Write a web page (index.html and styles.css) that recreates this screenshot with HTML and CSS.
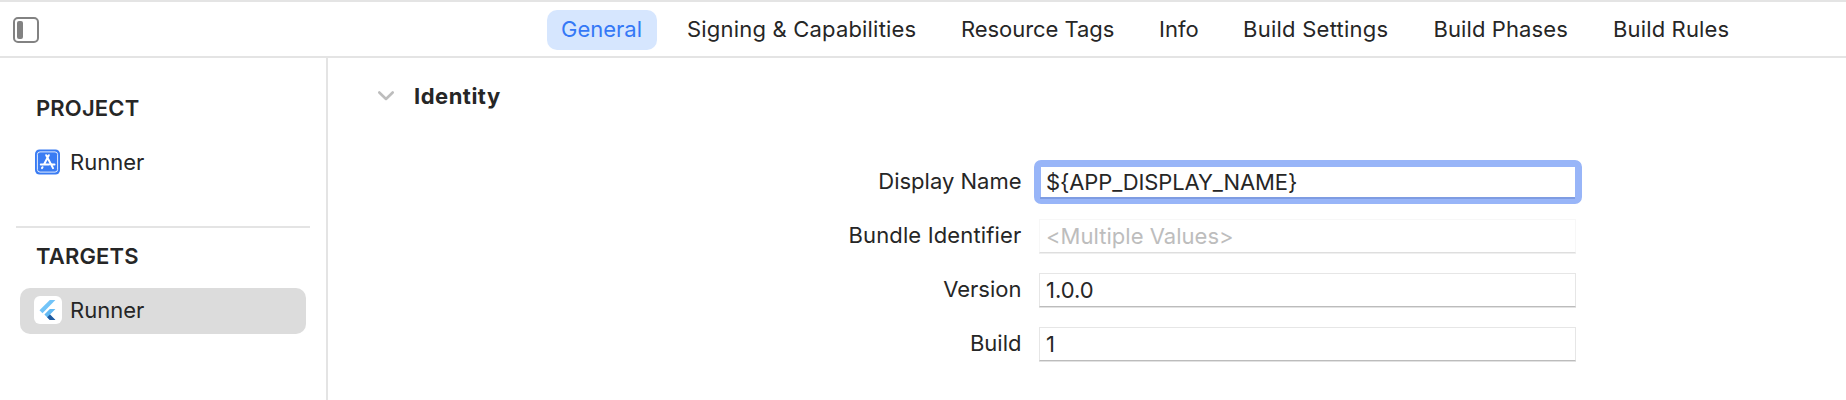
FILE: index.html
```html
<!DOCTYPE html>
<html lang="en">
<head>
<meta charset="utf-8">
<title>Runner</title>
<link rel="stylesheet" href="styles.css">
</head>
<body>
<header class="toolbar">
  <svg class="panel-icon" width="26" height="26" viewBox="0 0 26 26"><rect x="1" y="1" width="24" height="24" rx="4" fill="none" stroke="#828282" stroke-width="2"/><rect x="4" y="4" width="6" height="18" rx="2" fill="#828282"/></svg>
  <nav class="tabs">
    <span class="tab general">General</span>
    <span class="tab signing">Signing &amp; Capabilities</span>
    <span class="tab resource">Resource Tags</span>
    <span class="tab info">Info</span>
    <span class="tab settings">Build Settings</span>
    <span class="tab phases">Build Phases</span>
    <span class="tab rules">Build Rules</span>
  </nav>
</header>
<div class="body">
  <aside class="sidebar">
    <h2 class="heading">PROJECT</h2>
    <div class="item">
      <svg class="item-icon" width="28" height="28" viewBox="0 0 28 28"><rect x="1" y="1.500" width="25" height="25" rx="4.500" fill="#3a7cf3"/><rect x="3.400" y="3.900" width="20.200" height="20.200" rx="2.600" fill="none" stroke="#fff" stroke-opacity=".85" stroke-width="1"/><g stroke="#fff" stroke-width="2" stroke-linecap="round"><path d="M14.800 7.200 10 16.500M8.500 19.200l-.5.9M12.200 7.200l6.800 12.900M6.800 16.600h8.200M17.800 16.600h2.700"/></g></svg>
      <span class="item-name">Runner</span>
    </div>
    <hr class="divider">
    <h2 class="heading">TARGETS</h2>
    <div class="item selected">
      <svg class="item-icon" width="28" height="28" viewBox="0 0 28 28"><rect width="28" height="28" rx="6" fill="#fff"/><path d="M15.800 4H21.400L8.500 17.200 5.500 14.200z" fill="#72c4f8"/><path d="M15.800 13.100H21.400L16 18.600 21.400 24H15.800L10.400 18.600z" fill="#63baf3"/><path d="M13.100 21.300 16 18.600 21.400 24H15.800z" fill="#205a9f"/></svg>
      <span class="item-name">Runner</span>
    </div>
  </aside>
  <main class="content">
    <div class="section">
      <svg class="chevron" width="18" height="12" viewBox="0 0 18 12"><path d="M2.300 2.500 9 9l6.700-6.500" fill="none" stroke="#bdbdbd" stroke-width="2.600" stroke-linecap="round" stroke-linejoin="round"/></svg>
      <h1 class="title">Identity</h1>
    </div>
    <div class="form">
      <div class="row"><label class="label">Display Name</label><div class="field focused"><span class="macro">${APP_DISPLAY_NAME}</span></div></div>
      <div class="row"><label class="label bundle">Bundle Identifier</label><div class="field muted"><span class="multiple">&lt;Multiple Values&gt;</span></div></div>
      <div class="row"><label class="label">Version</label><div class="field"><span>1.0.0</span></div></div>
      <div class="row"><label class="label">Build</label><div class="field"><span>1</span></div></div>
    </div>
  </main>
</div>
</body>
</html>
```
FILE: styles.css
```css
* { box-sizing: border-box; }
body {
  margin: 0;
  height: 400px;
  overflow: hidden;
  display: flex;
  flex-direction: column;
  background: #fff;
  color: #262626;
  font: 22px/30px Inter, "Liberation Sans", sans-serif;
  white-space: nowrap;
}
.toolbar {
  height: 58px;
  flex: none;
  display: flex;
  align-items: flex-start;
  border-top: 2px solid #e4e4e4;
  border-bottom: 2px solid #e4e4e4;
  padding-left: 13px;
}
.panel-icon { margin-top: 15px; flex: none; }
.tabs { display: flex; gap: 16px; margin: 8px 0 0 508px; }
.tab { height: 40px; padding: 4px 0 0 14px; border-radius: 10px; }
.general { width: 110px; background: #d6e6fe; color: #3478f6; }
.signing { width: 258px; letter-spacing: 0.19px; }
.resource { width: 182px; letter-spacing: -0.05px; }
.info { width: 68px; }
.settings { width: 174.500px; letter-spacing: 0.25px; }
.phases { width: 163.500px; letter-spacing: 0.1px; }
.rules { width: 146px; letter-spacing: 0.15px; }
.body { flex: 1; display: flex; }
.sidebar { width: 328px; flex: none; border-right: 2px solid #e4e4e4; padding-top: 35px; }
.heading { margin: 0 0 0 36px; font-size: 22px; font-weight: 600; line-height: 30px; letter-spacing: 0.15px; }
.item { display: flex; align-items: center; height: 46px; margin: 17px 20px 0; padding-left: 14px; border-radius: 10px; gap: 8px; }
.item-icon { flex: none; margin-top: -2px; }
.item-name { padding-bottom: 2px; }
.divider { height: 2px; margin: 40px 16px 13px; border: 0; background: #e4e4e4; }
.selected { background: #dcdcdc; }
.content { flex: 1; padding: 23px 0 0 49px; }
.section { display: flex; align-items: center; height: 30px; }
.chevron { margin-right: 19px; }
.title { margin: 0; font-size: 22px; font-weight: 700; line-height: 30px; letter-spacing: 0.5px; }
.form { display: grid; gap: 20px; margin-top: 54px; }
.row { display: flex; height: 34px; }
.label { width: 644.500px; text-align: right; margin-right: 17.500px; padding-top: 1px; }
.bundle { letter-spacing: 0.15px; }
.field { width: 537px; height: 34px; padding: 1px 0 0 6px; border: 1px solid #e6e6e6; border-bottom: 1px solid #bcbcbc; box-shadow: 0 1px #e2e2e2; }
.muted { border-color: #f7f7f7; border-bottom-color: #dedede; box-shadow: 0 1px #efefef; color: #bdbdbd; }
.multiple { letter-spacing: 0.03px; }
.macro { letter-spacing: -0.12px; }
/* The focus ring is drawn around the field without affecting its box. */
.focused { position: relative; border-color: transparent; box-shadow: none; }
.focused::before {
  content: "";
  position: absolute;
  inset: -6px -7px -6px -6px;
  border: 7px solid #98b5f8;
  border-radius: 7px;
}
.focused::after {
  content: "";
  position: absolute;
  inset: auto 0 -1px 0;
  height: 2px;
  background: #7e9ce2;
}
```
